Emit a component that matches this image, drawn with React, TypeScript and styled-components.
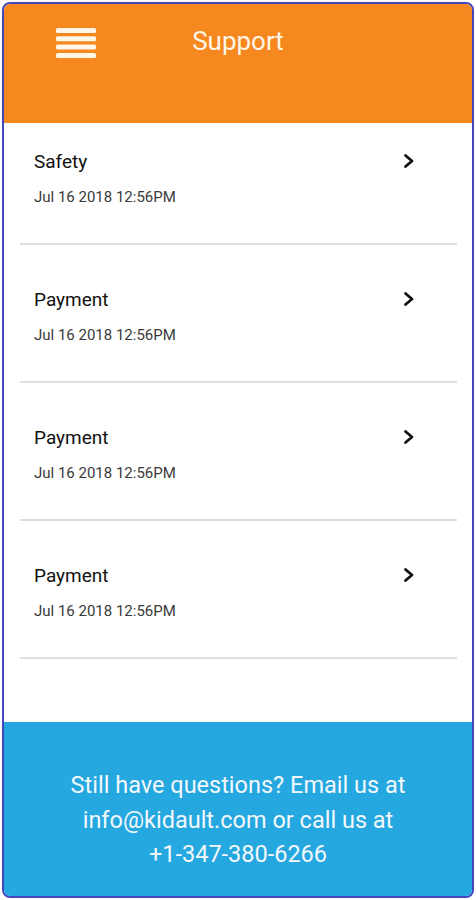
import styled, { createGlobalStyle } from "styled-components";

const tickets = [
  { title: "Safety", date: "Jul 16 2018 12:56PM" },
  { title: "Payment", date: "Jul 16 2018 12:56PM" },
  { title: "Payment", date: "Jul 16 2018 12:56PM" },
  { title: "Payment", date: "Jul 16 2018 12:56PM" },
];

export default function App() {
  return (
    <>
      <GlobalStyle />
      <Frame>
        <Header>
          <MenuButton aria-label="menu">
            <svg width="40" height="30" viewBox="0 0 40 30">
              {[0, 8.3, 16.6, 25].map((y) => (
                <rect key={y} x="0" y={y} width="40" height="5" rx="1.5" fill="#fff6e6" />
              ))}
            </svg>
          </MenuButton>
          <Title>Support</Title>
          <span />
        </Header>

        <List>
          {tickets.map((t, i) => (
            <Row key={i}>
              <RowText>
                <RowTitle>{t.title}</RowTitle>
                <RowDate>{t.date}</RowDate>
              </RowText>
              <Chevron width="14" height="16" viewBox="0 0 14 16">
                <path
                  d="M3.5 2.5 L10 8 L3.5 13.5"
                  fill="none"
                  stroke="#111"
                  strokeWidth="2.8"
                  strokeLinecap="round"
                  strokeLinejoin="round"
                />
              </Chevron>
            </Row>
          ))}
        </List>

        <Footer>
          <FooterText>
            Still have questions? Email us at info@kidault.com or call us at{" "}
            <Phone>+1-347-380-6266</Phone>
          </FooterText>
        </Footer>
      </Frame>
    </>
  );
}

const GlobalStyle = createGlobalStyle`
  html, body {
    margin: 0;
    padding: 0;
    background: #ffffff;
  }
  body {
    font-family: Roboto, "Liberation Sans", sans-serif;
  }
`;

const Frame = styled.div`
  box-sizing: border-box;
  margin: 2px;
  height: 896px;
  border: 2px solid #4446c0;
  border-radius: 8px;
  overflow: hidden;
  display: flex;
  flex-direction: column;
  background: #fff;
`;

const Header = styled.header`
  height: 119px;
  flex-shrink: 0;
  background: #f5891f;
  display: grid;
  grid-template-columns: 1fr auto 1fr;
  align-items: start;
  padding: 22px 0 0 52px;
  box-sizing: border-box;
`;

const MenuButton = styled.div`
  margin-top: 2px;
  width: 40px;
  height: 30px;
  line-height: 0;
`;

const Title = styled.h1`
  margin: 0 0 0 -52px;
  font-size: 26px;
  line-height: 30px;
  font-weight: 400;
  color: #fff6e6;
`;

const List = styled.main`
  flex: 1;
  display: flex;
  flex-direction: column;
  gap: 16px;
`;

const Row = styled.div`
  margin: 0 15px 0 16px;
  padding: 28px 41px 37px 14px;
  border-bottom: 2px solid #dedede;
  display: flex;
  align-items: flex-start;
  justify-content: space-between;
`;

const RowText = styled.div`
  display: flex;
  flex-direction: column;
  gap: 15px;
`;

const RowTitle = styled.div`
  font-size: 19px;
  line-height: 22px;
  color: #111;
`;

const RowDate = styled.div`
  font-size: 15px;
  line-height: 18px;
  color: #3a3a3a;
`;

const Chevron = styled.svg`
  margin-top: 2px;
`;

const Footer = styled.footer`
  height: 174px;
  flex-shrink: 0;
  background: #25a7df;
  display: flex;
  justify-content: center;
  padding-top: 46px;
  box-sizing: border-box;
`;

const FooterText = styled.p`
  margin: 0;
  width: 350px;
  text-align: center;
  font-size: 23.5px;
  line-height: 34.5px;
  color: #f2f8fc;
`;

const Phone = styled.span`
  white-space: nowrap;
`;
